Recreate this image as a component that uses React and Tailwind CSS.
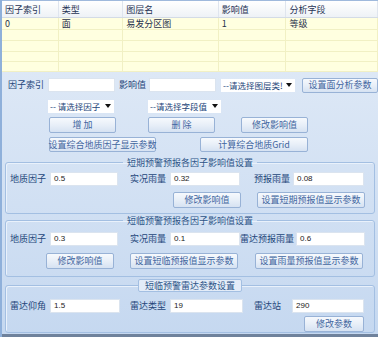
import React from "react";

const cjk = { fontFamily: '"Noto Sans CJK SC", "Noto Sans", sans-serif' };

const Label = ({ children, w, ml = 0 }) => (
  <span
    className="shrink-0 text-[9px] leading-[14px] text-[#24467a] whitespace-nowrap"
    style={{ width: w, marginLeft: ml }}
  >
    {children}
  </span>
);

const Input = ({ value = "", w, ml = 0 }) => (
  <div
    className="shrink-0 h-[14px] bg-white border border-[#dbe4ef] px-[3px] text-[8px] leading-[12px] text-[#222] font-['Liberation_Sans',sans-serif]"
    style={{ width: w, marginLeft: ml }}
  >
    {value}
  </div>
);

const Select = ({ text, w, ml = 0 }) => (
  <div
    className="shrink-0 h-[13px] bg-white flex items-center justify-between pl-[2px] pr-[3px] text-[8.5px] text-[#24467a] whitespace-nowrap overflow-hidden"
    style={{ width: w, marginLeft: ml }}
  >
    <span className="overflow-hidden">{text}</span>
    <svg width="6" height="4" viewBox="0 0 6 4" className="shrink-0 ml-[2px]">
      <path d="M0 0h6L3 4z" fill="#111" />
    </svg>
  </div>
);

const Btn = ({ children, w, h = 16, ml = 0 }) => (
  <div
    className="shrink-0 flex items-center justify-center rounded-[2px] border border-[#98b2d6] bg-gradient-to-b from-[#f6f9fd] via-[#e8eff8] to-[#d6e2f2] text-[9px] text-[#4266a0] whitespace-nowrap"
    style={{ width: w, height: h, marginLeft: ml }}
  >
    {children}
  </div>
);

const Group = ({ title, boxed, children, className }) => (
  <fieldset
    className={`mx-[3px] rounded-[3px] border border-[#a3bfe2] shadow-[inset_1px_1px_0_#e9f1fb] ${className}`}
  >
    <legend
      className={`mx-auto text-[9px] leading-[11px] text-[#2d5487] ${
        boxed
          ? "border border-[#a3bfe2] rounded-[2px] bg-[#e3ecf8] px-[6px]"
          : "px-[4px]"
      }`}
    >
      {title}
    </legend>
    {children}
  </fieldset>
);

const cols = [
  { w: 57, t: "因子索引" },
  { w: 65, t: "类型" },
  { w: 96, t: "图层名" },
  { w: 68, t: "影响值" },
  { w: 92, t: "分析字段" },
];
const rows = [
  ["0", "面", "易发分区图", "1", "等级"],
  ["", "", "", "", ""],
  ["", "", "", "", ""],
  ["", "", "", "", ""],
  ["", "", "", "", ""],
];
const rowH = [12, 11, 11, 10, 10];

export default function App() {
  return (
    <div
      className="w-[378px] h-[337px] overflow-hidden flex flex-col bg-[#c9dbf1] border-l-2 border-[#8fb0da]"
      style={cjk}
    >
      {/* table */}
      <div className="h-[72px] shrink-0 bg-[#ffffe0] border-t border-[#9fb9dc]">
        <div className="flex h-[17px] bg-gradient-to-b from-white to-[#eef2f6] border-b border-[#d3dbe6]">
          {cols.map((c) => (
            <div
              key={c.t}
              className="px-[3px] text-[9px] leading-[17px] text-[#1f3355] border-r border-[#dfe5ee]"
              style={{ width: c.w }}
            >
              {c.t}
            </div>
          ))}
        </div>
        {rows.map((r, i) => (
          <div
            key={i}
            className="flex border-b border-[#f1f0c4]"
            style={{ height: rowH[i] }}
          >
            {r.map((v, j) => (
              <div
                key={j}
                className="px-[3px] text-[9px] leading-[11px] text-[#1f2f4a] border-r border-[#f1f0c4]"
                style={{ width: cols[j].w }}
              >
                {v}
              </div>
            ))}
          </div>
        ))}
      </div>

      {/* panel */}
      <div className="flex-1 flex flex-col bg-gradient-to-b from-[#dde8f6] to-[#c5d8f0]">
        <div className="flex items-center mt-[6px] h-[14px]">
          <Label w={40} ml={6}>因子索引</Label>
          <Input w={67} />
          <Label w={30} ml={4}>影响值</Label>
          <Input w={67} />
          <Select text="--请选择图层类!" w={74} ml={5} />
          <Btn w={76} h={15} ml={7}>设置面分析参数</Btn>
        </div>
        <div className="flex items-center mt-[8px] h-[12px]">
          <Select text="-- 请选择因子" w={66} ml={46} />
          <Select text="--请选择字段值" w={73} ml={34} />
        </div>
        <div className="flex items-center mt-[5px]">
          <Btn w={67} ml={47}>增 加</Btn>
          <Btn w={67} ml={32}>删 除</Btn>
          <Btn w={67} ml={26}>修改影响值</Btn>
        </div>
        <div className="flex items-center mt-[4px]">
          <Btn w={107} h={15} ml={47}>设置综合地质因子显示参数</Btn>
          <Btn w={108} h={15} ml={44}>计算综合地质Grid</Btn>
        </div>

        <Group title="短期预警预报各因子影响值设置" className="mt-[5px] h-[57px]">
          <div className="flex items-center mt-[4px]">
            <Label w={40} ml={4}>地质因子</Label>
            <Input w={68} value="0.5" />
            <Label w={40} ml={12}>实况雨量</Label>
            <Input w={70} value="0.32" />
            <Label w={39} ml={14}>预报雨量</Label>
            <Input w={71} value="0.08" />
          </div>
          <div className="flex items-center mt-[6px]">
            <Btn w={68} ml={167}>修改影响值</Btn>
            <Btn w={108} ml={16}>设置短期预报值显示参数</Btn>
          </div>
        </Group>

        <Group title="短临预警预报各因子影响值设置" className="mt-[1px] h-[62px]">
          <div className="flex items-center mt-[6px]">
            <Label w={40} ml={4}>地质因子</Label>
            <Input w={68} value="0.3" />
            <Label w={40} ml={12}>实况雨量</Label>
            <Input w={70} value="0.1" />
            <Label w={56} ml={0}>雷达预报雨量</Label>
            <Input w={69} value="0.6" />
          </div>
          <div className="flex items-center mt-[7px]">
            <Btn w={68} ml={40}>修改影响值</Btn>
            <Btn w={108} ml={16}>设置短临预报值显示参数</Btn>
            <Btn w={108} ml={17}>设置雨量预报值显示参数</Btn>
          </div>
        </Group>

        <Group title="短临预警雷达参数设置" boxed className="mt-[2px] h-[54px]">
          <div className="flex items-center mt-[7px]">
            <Label w={40} ml={4}>雷达仰角</Label>
            <Input w={70} value="1.5" />
            <Label w={40} ml={10}>雷达类型</Label>
            <Input w={73} value="19" />
            <Label w={38} ml={11}>雷达站</Label>
            <Input w={72} value="290" />
          </div>
          <div className="flex items-center mt-[3px]">
            <Btn w={60} ml={298}>修改参数</Btn>
          </div>
        </Group>
        <div className="mt-auto h-[3px] bg-[#6f829c]" />
      </div>
    </div>
  );
}
